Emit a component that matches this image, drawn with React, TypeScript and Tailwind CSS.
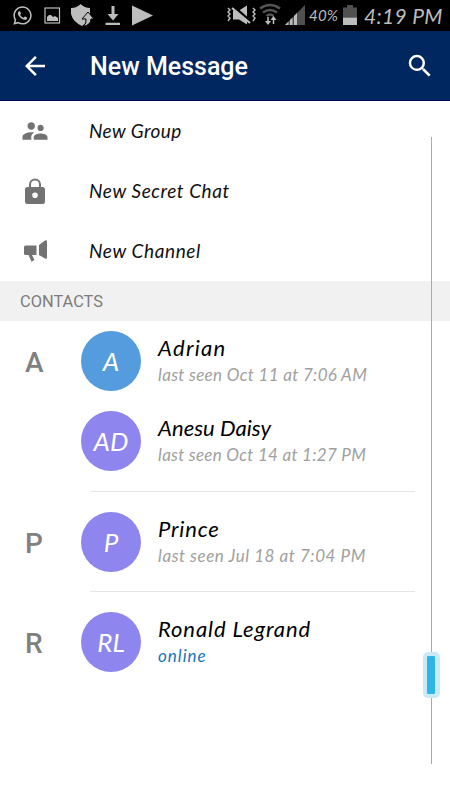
import React from "react";
import { MdArrowBack, MdSearch, MdSupervisorAccount } from "react-icons/md";
import { FaWhatsapp } from "react-icons/fa";

const hand = "font-['Lato',sans-serif] italic whitespace-nowrap";

function StatusBar() {
  return (
    <div className="relative flex h-[31px] items-center bg-black text-[#bdbdbd]">
      <svg width="160" height="31" viewBox="0 0 160 31" fill="none" className="shrink-0">
        <FaWhatsapp x="12" y="5" width="21" height="21" size={21} color="#bdbdbd" />
        <rect x="45" y="8" width="14.5" height="15" stroke="#bdbdbd" strokeWidth="1.2" />
        <path d="M47 21v-4l2-2h2l2 2 2-1 3 2v3z" fill="#bdbdbd" />
        <path d="M71 8q6 0 9.500-4q4 4 9.500 4v6l-3 4v4l-5 4q-9-4-11-12z" fill="#bdbdbd" />
        <path d="M88 12l6 7h-3q0 6-8 7.500q4-3 3-7.500h-4z" fill="#bdbdbd" stroke="#000" strokeWidth="1" />
        <path d="M111.500 6h3v8h4l-5.500 6.500-5.500-6.500h4zM105.500 22.800h14.500v2.200h-14.500z" fill="#bdbdbd" />
        <path d="M132 5.500v20l21-10z" fill="#bdbdbd" />
      </svg>
      <svg width="80" height="31" viewBox="226 0 80 31" fill="none" className="ml-[66px] shrink-0">
        <path d="M233 10.500h6l8-5v19l-8-5h-6z" fill="#bdbdbd" />
        <path d="M233 6l18 16" stroke="#000" strokeWidth="3" />
        <path d="M232 8l18 15" stroke="#bdbdbd" strokeWidth="2.200" />
        <path d="M228 8l2 2-2 2 2 2-2 2 2 2-2 3M253 8l2 2-2 2 2 2-2 2 2 2-2 3" stroke="#bdbdbd" strokeWidth="1.4" />
        <path d="M260 8.500q10-7 20 0M263 12.500q7-5 14 0M266.500 16q3.500-3 7 0" stroke="#555" strokeWidth="2.400" />
        <path d="M268 17v5M273.500 24v-5" stroke="#bdbdbd" strokeWidth="1.500" />
        <path d="M265 21h6l-3 4zM270.500 20h6l-3-4z" fill="#bdbdbd" />
        <path d="M285 25L305 5v20z" fill="#505050" />
        <path d="M285 25l3.500-3.500v3.500zM290 25v-5l2.500-2.500v7.500zM294 25v-9l3-3v12z" fill="#bdbdbd" />
      </svg>
      <span className={`${hand} ml-[3px] w-[34px] text-[15px] tracking-[0.2px]`}>40%</span>
      <svg width="14" height="31" viewBox="0 0 14 31" className="shrink-0">
        <path d="M4 5h6v2.500h4v10h-14v-10h4z" fill="#505050" />
        <path d="M0 17.500h14v7.500h-14z" fill="#bdbdbd" />
      </svg>
      <span className={`${hand} ml-[7px] text-[21px] leading-[31px] tracking-[0.3px]`}>4:19 PM</span>
    </div>
  );
}

function LockIcon() {
  return (
    <svg width="20" height="27" viewBox="0 0 20 27" fill="none">
      <path d="M5 10V6.500a5 5 0 0 1 10 0V10" stroke="#737373" strokeWidth="2" />
      <path fillRule="evenodd" fill="#737373" d="M2.500 9h15a2.500 2.500 0 0 1 2.500 2.500v12a2.500 2.500 0 0 1-2.500 2.500h-15A2.500 2.500 0 0 1 0 23.500v-12A2.500 2.500 0 0 1 2.500 9zM10 14.500a2.800 2.800 0 1 0 0 5.600a2.800 2.800 0 0 0 0-5.600z" />
    </svg>
  );
}

function HornIcon() {
  return (
    <svg width="23" height="22" viewBox="0 0 23 22" fill="#737373">
      <path d="M1.500 5.500H12.500v9.500H8l2.500 5-3 1.800L4.500 15H1.500Q0 15 0 13.500V7q0-1.500 1.500-1.500zM15 5l6-4.500q2-.8 2 1v16q0 1.800-2 1l-6-3.500z" />
    </svg>
  );
}

function Action({ icon, label, track }: { icon: React.ReactNode; label: string; track: string }) {
  return (
    <div className="flex h-[60px] items-center">
      <div className="flex w-[70px] justify-center">{icon}</div>
      <span className={`${hand} ml-[19px] text-[19px] leading-6 text-[#111] ${track}`}>{label}</span>
    </div>
  );
}

interface ContactProps {
  letter?: string;
  initials: string;
  color: string;
  name: string;
  status: string;
  online?: boolean;
  nameTrack: string;
  statusTrack: string;
}

function Contact({ letter, initials, color, name, status, online, nameTrack, statusTrack }: ContactProps) {
  return (
    <div className="flex h-20 items-center">
      <div className="w-[81px] pl-[25px] pt-[3px] font-['Roboto',sans-serif] text-[28px] font-medium leading-8 text-[#808080]">{letter}</div>
      <div className={`flex size-[60px] items-center justify-center rounded-full text-white ${color}`}>
        <span className={`${hand} text-[26px] leading-8`}>{initials}</span>
      </div>
      <div className="ml-[17px] flex flex-col pt-px">
        <span className={`${hand} text-[22px] leading-[26px] text-black ${nameTrack}`}>{name}</span>
        <span className={`${hand} text-[17px] leading-7 ${online ? "text-[#1674b8]" : "text-[#a0a0a0]"} ${statusTrack}`}>{status}</span>
      </div>
    </div>
  );
}

function Divider({ spacing }: { spacing: string }) {
  return (
    <div className={`ml-[90px] w-[325px] ${spacing}`}>
      <div className="h-px w-full bg-[#e5e5e5]" />
    </div>
  );
}

export default function App() {
  return (
    <div className="relative h-[800px] w-[450px] overflow-hidden bg-white">
      <StatusBar />
      <header className="flex h-[70px] items-center border-b border-[#000050] bg-[#002760] text-white">
        <MdArrowBack size={30} className="ml-5" />
        <h1 className="ml-10 flex-1 pt-0.5 font-['Roboto',sans-serif] text-[25px] font-medium">New Message</h1>
        <MdSearch size={30} className="mr-[15px]" />
      </header>
      <Action icon={<MdSupervisorAccount size={30} color="#737373" />} label="New Group" track="tracking-[0.4px]" />
      <Action icon={<LockIcon />} label="New Secret Chat" track="tracking-[0.58px]" />
      <Action icon={<HornIcon />} label="New Channel" track="tracking-[0.6px]" />
      <div className="flex h-10 items-center bg-[#f1f1f1] pl-5 pt-0.5 font-['Roboto',sans-serif] text-[16.400px] text-[#7c7c7c]">CONTACTS</div>
      <Contact letter="A" initials="A" color="bg-[#549cdd]" name="Adrian" status="last seen Oct 11 at 7:06 AM" nameTrack="tracking-[1.3px]" statusTrack="tracking-[0.34px]" />
      <Contact initials="AD" color="bg-[#8e85ee]" name="Anesu Daisy" status="last seen Oct 14 at 1:27 PM" nameTrack="tracking-[0.05px]" statusTrack="tracking-[0.3px]" />
      <Divider spacing="pt-2.5 pb-2.5" />
      <Contact letter="P" initials="P" color="bg-[#8e85ee]" name="Prince" status="last seen Jul 18 at 7:04 PM" nameTrack="tracking-[0.8px]" statusTrack="tracking-[0.56px]" />
      <Divider spacing="pt-[9px] pb-2.5" />
      <Contact letter="R" initials="RL" color="bg-[#8e85ee]" name="Ronald Legrand" status="online" online nameTrack="tracking-[0.9px]" statusTrack="tracking-[1px]" />
      <div className="absolute left-[431px] top-[137px] h-[627px] w-px bg-[#aaa]" />
      <div className="absolute left-[423px] top-[652px] flex h-[46px] w-[17px] items-center justify-center rounded-[5px] bg-[#c9ebf8]">
        <div className="mr-px h-[38px] w-[8px] rounded-[1px] bg-[#2fb4e7]" />
      </div>
    </div>
  );
}
